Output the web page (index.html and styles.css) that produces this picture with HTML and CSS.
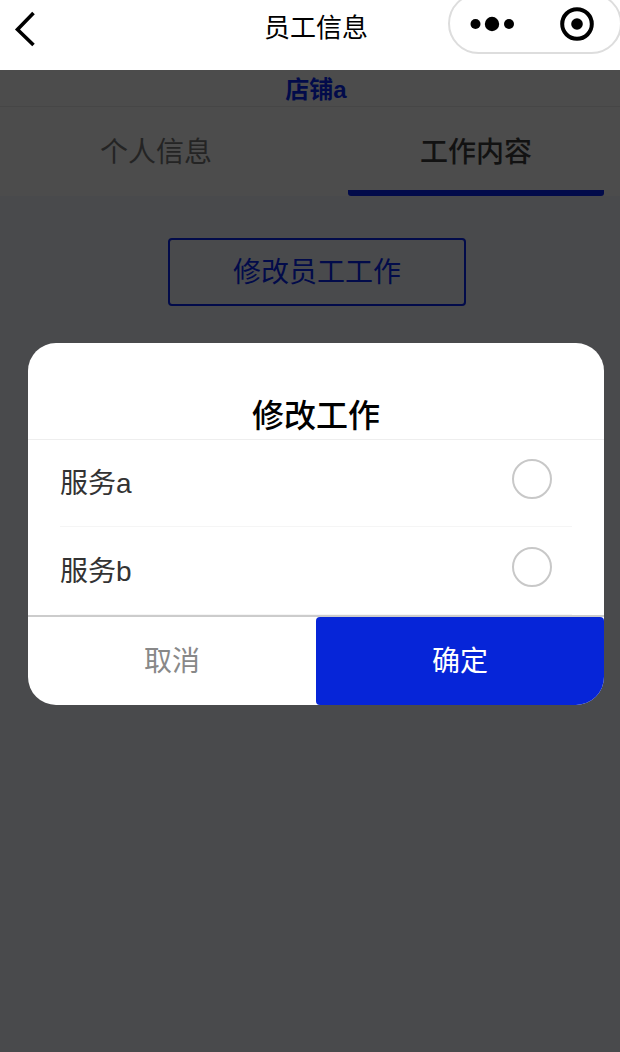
FILE: index.html
```html
<!DOCTYPE html>
<html lang="zh-CN">
<head>
    <meta charset="UTF-8">
    <meta name="viewport" content="width=device-width, initial-scale=1.0">
    <title>员工信息</title>
    <link rel="stylesheet" href="styles.css">
</head>
<body>
<div class="navbar">
    <svg class="back" width="24" height="38" viewBox="0 0 24 38">
        <path d="M20.5 3 L4.5 19.5 L20.5 35" fill="none" stroke="#000" stroke-width="3.6"/>
    </svg>
    <div class="nav-title">员工信息</div>
    <div class="capsule">
        <svg class="dots" width="46" height="16" viewBox="0 0 46 16">
            <circle cx="5.5" cy="8" r="5" fill="#000"/>
            <circle cx="22" cy="8" r="7.2" fill="#000"/>
            <circle cx="39" cy="8" r="5" fill="#000"/>
        </svg>
        <svg class="target" width="34" height="34" viewBox="0 0 34 34">
            <circle cx="17" cy="17" r="14.8" fill="none" stroke="#000" stroke-width="4"/>
            <circle cx="17" cy="17" r="5.8" fill="#000"/>
        </svg>
    </div>
</div>

<div class="page">
    <div class="shop">店铺a</div>
    <div class="tabs">
        <div class="tab">个人信息</div>
        <div class="tab active">工作内容</div>
    </div>
    <div class="edit-wrap">
        <div class="edit-btn">修改员工工作</div>
    </div>
</div>

<div class="mask">
    <div class="dialog">
        <div class="dialog-title">修改工作</div>
        <div class="option first">
            <span class="option-name">服务a</span>
            <span class="radio"></span>
        </div>
        <div class="option">
            <span class="option-name">服务b</span>
            <span class="radio"></span>
        </div>
        <div class="dialog-footer">
            <div class="cancel">取消</div>
            <div class="confirm">确定</div>
        </div>
    </div>
</div>
</body>
</html>
```

FILE: styles.css
```css
* {
    box-sizing: border-box;
}

body {
    margin: 0;
    height: 1052px;
    overflow: hidden;
    background: #494a4c;
    font-family: "Liberation Sans", "Noto Sans CJK SC", sans-serif;
}

.navbar {
    height: 70px;
    background: #fff;
    padding: 0 16px 16px 28px;
    display: flex;
    align-items: center;
    justify-content: center;
    position: relative;
    overflow: hidden;
}

.back {
    position: absolute;
    left: 13px;
    top: 10px;
}

.nav-title {
    font-size: 26px;
    color: #000;
    margin-top: -4px;
}

.capsule {
    position: absolute;
    left: 448px;
    top: -7px;
    width: 174px;
    height: 61px;
    border: 2px solid #ddd;
    border-radius: 31px;
    display: flex;
    align-items: center;
}

.dots {
    margin-left: 20px;
}

.target {
    margin-left: 44px;
}

/* the page under the dialog, colours are already dimmed */
.shop {
    height: 37px;
    line-height: 39px;
    padding: 0 16px 0 28px;
    text-align: center;
    font-size: 24px;
    font-weight: bold;
    color: #020b4a;
    background: #4c4c4c;
    border-bottom: 1px solid #464646;
}

.tabs {
    height: 89px;
    display: flex;
    gap: 64px;
    background: #4c4c4c;
    padding: 0 16px 0 28px;
}

.tab {
    flex: 1;
    text-align: center;
    font-size: 28px;
    line-height: 91px;
    color: #242424;
    border-bottom: 6px solid transparent;
    border-radius: 3px;
}

.tab.active {
    color: #121212;
    font-weight: 500;
    border-bottom-color: #020b4a;
}

.edit-wrap {
    display: flex;
    justify-content: center;
    padding: 42px 14px 0 28px;
}

.edit-btn {
    width: 298px;
    height: 68px;
    border: 2px solid #020b4a;
    border-radius: 4px;
    color: #020b4a;
    font-size: 28px;
    line-height: 65px;
    text-align: center;
}

.mask {
    position: absolute;
    left: 0;
    right: 0;
    top: 70px;
    bottom: 0;
    padding: 273px 16px 0 28px;
}

.dialog {
    background: #fff;
    height: 362px;
    border-radius: 28px;
    overflow: hidden;
}

.dialog-title {
    height: 97px;
    padding-top: 51px;
    text-align: center;
    font-size: 32px;
    line-height: 44px;
    font-weight: 500;
    color: #000;
    border-bottom: 1px solid #eee;
}

.option {
    height: 88px;
    margin: 0 32px;
    display: flex;
    justify-content: space-between;
    align-items: center;
    font-size: 28px;
    color: #333;
    border-bottom: 1px solid #f5f5f5;
}

.option.first {
    height: 87px;
}

.option-name {
    margin-top: -4px;
}

.radio {
    width: 40px;
    height: 40px;
    margin-right: 20px;
    margin-top: -8px;
    border: 2px solid #c8c8c8;
    border-radius: 50%;
}

.dialog-footer {
    height: 90px;
    display: flex;
    border-top: 2px solid #ccc;
}

.cancel,
.confirm {
    flex: 1;
    text-align: center;
    font-size: 28px;
    line-height: 90px;
}

.cancel {
    color: #888;
}

.confirm {
    color: #fff;
    background: #0625d8;
    border-radius: 4px;
}
```
